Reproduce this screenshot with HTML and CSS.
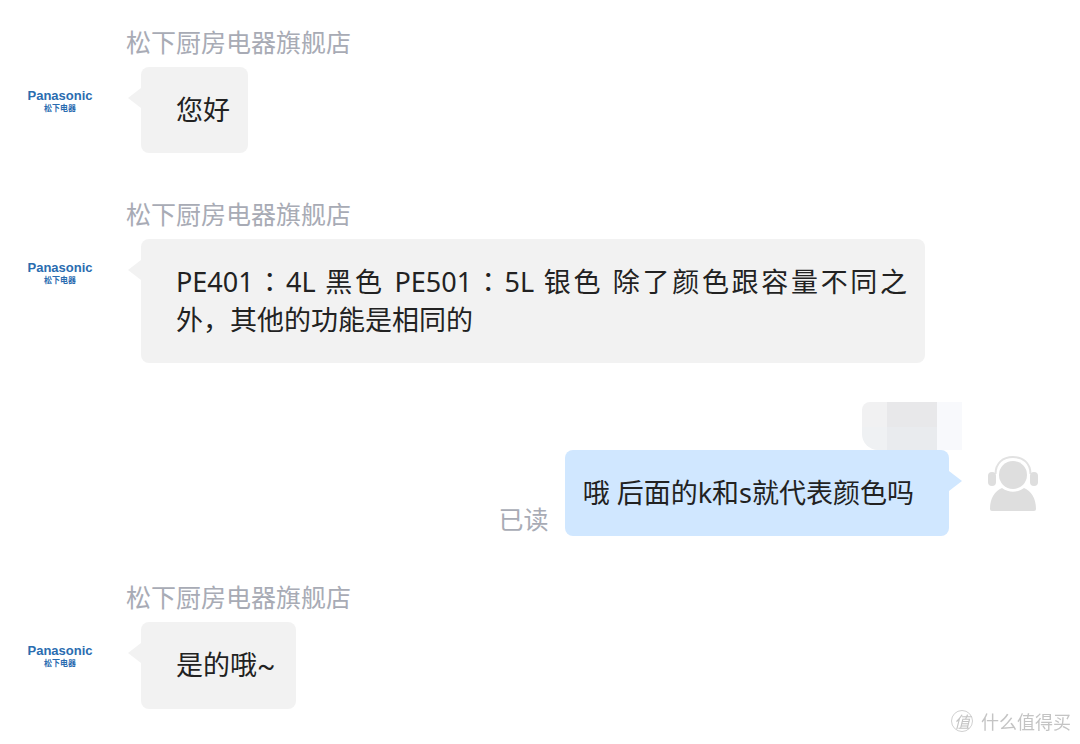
FILE: index.html
```
<!DOCTYPE html>
<html lang="zh-CN">
<head>
    <meta charset="UTF-8" />
    <meta name="viewport" content="width=device-width, initial-scale=1.0" />
    <title>松下厨房电器旗舰店</title>
    <link rel="stylesheet" href="styles.css">
</head>
<body>
    <main class="chat">
        <div class="message">
            <div class="logo"><span class="logo-name">Panasonic</span><span class="logo-sub">松下电器</span></div>
            <div class="content">
                <div class="name">松下厨房电器旗舰店</div>
                <div class="bubble">您好</div>
            </div>
        </div>

        <div class="message">
            <div class="logo"><span class="logo-name">Panasonic</span><span class="logo-sub">松下电器</span></div>
            <div class="content">
                <div class="name">松下厨房电器旗舰店</div>
                <div class="bubble" lang="zh-TW">PE401：4L 黑色 PE501：5L 银色 除了颜色跟容量不同之<span class="keep" lang="zh-CN">外，其他</span>的功能是相同的</div>
            </div>
        </div>

        <div class="message own">
            <div class="content">
                <div class="masked-name">
                    <span class="mask-light"></span><span class="mask-dark"></span><span class="mask-pale"></span>
                    <span class="mask-light low"></span><span class="mask-dark low"></span><span class="mask-pale"></span>
                </div>
                <div class="row">
                    <span class="read">已读</span>
                    <div class="bubble">哦 后面的k和s就代表颜色吗</div>
                </div>
            </div>
            <svg class="avatar" width="52" height="58" viewBox="0 0 52 58" fill="#dedede">
                <path d="M8.500 19 C8.500 8 16 2 26 2 C36 2 43.500 8 43.500 19" fill="none" stroke="#e2e2e2" stroke-width="2" />
                <rect x="1" y="17" width="8" height="14" rx="4" />
                <rect x="43" y="17" width="8" height="14" rx="4" />
                <circle cx="26" cy="20" r="14" />
                <path d="M3 54 C3 43 8 36 15 33 C22 38 30 38 37 33 C44 36 49 43 49 54 Q49 56 47 56 H5 Q3 56 3 54 Z" />
            </svg>
        </div>

        <div class="message">
            <div class="logo"><span class="logo-name">Panasonic</span><span class="logo-sub">松下电器</span></div>
            <div class="content">
                <div class="name">松下厨房电器旗舰店</div>
                <div class="bubble">是的哦<span class="tilde">~</span></div>
            </div>
        </div>
    </main>

    <div class="watermark"><span class="watermark-icon">值</span>什么值得买</div>
</body>
</html>
```
FILE: styles.css
```
* {
    box-sizing: border-box;
    margin: 0;
    padding: 0;
}

body {
    background: #fff;
    color: #222;
    font-family: "Noto Sans", "Noto Sans CJK SC", sans-serif;
    font-size: 27px;
    line-height: 38px;
}

.chat {
    display: flex;
    flex-direction: column;
    gap: 46px;
    padding: 27px 0 32px;
}

.message {
    display: flex;
    gap: 34px;
    padding: 0 155px 0 28px;
}

.logo {
    display: flex;
    flex-direction: column;
    align-items: center;
    flex: none;
    width: 64px;
    padding-top: 62px;
    color: #2a6cb0;
    font-weight: bold;
}

.logo-name {
    font-family: "Liberation Sans", sans-serif;
    font-size: 13px;
    line-height: 14px;
}

.logo-sub {
    font-family: "Noto Sans CJK SC", sans-serif;
    font-size: 8px;
    line-height: 10px;
}

.content {
    display: flex;
    flex-direction: column;
    align-items: flex-start;
    gap: 12px;
}

.name, .read {
    color: #a8abb5;
    font-family: "Noto Sans CJK SC", sans-serif;
    font-size: 25px;
    line-height: 28px;
}

.bubble {
    position: relative;
    margin-left: 15px;
    padding: 24px 18px 24px 35px;
    border-radius: 8px;
    background: #f2f2f2;
    text-align: justify;
    text-spacing-trim: space-all;
}

.bubble:lang(zh-TW) {
    font-family: "Noto Sans", "Noto Sans CJK TC", sans-serif;
}

.bubble::before {
    content: "";
    position: absolute;
    top: 21px;
    right: 100%;
    border: 10px solid transparent;
    border-left-width: 0;
    border-right: 13px solid #f2f2f2;
}

.keep {
    font-family: "Noto Sans", "Noto Sans CJK SC", sans-serif;
    white-space: nowrap;
}

.tilde {
    padding-right: 3px;
    font-family: Roboto, sans-serif;
}

.own {
    justify-content: flex-end;
    gap: 25px;
    margin-top: -7px;
    padding: 0 41px 0 28px;
}

.own .content {
    align-items: flex-end;
    gap: 0;
}

.own .bubble {
    margin: 0 13px 0 16px;
    padding: 24px 35px 24px 18px;
    background: #d0e7ff;
}

.own .bubble::before {
    right: auto;
    left: 100%;
    border-right-width: 0;
    border-left: 13px solid #d0e7ff;
}

.row {
    display: flex;
    align-items: flex-end;
}

.read {
    flex: none;
    line-height: 36px;
}

.masked-name {
    display: grid;
    grid-template-columns: 25px 50px 25px;
    grid-template-rows: 25px 23px;
    border-radius: 8px 0 0 16px;
    overflow: hidden;
}

.mask-light {
    background: #f1f1f2;
}

.mask-dark {
    background: #e8e8ea;
}

.mask-pale {
    background: #f8f9fc;
}

.mask-light.low {
    background: #eff1f3;
}

.mask-dark.low {
    background: #e9ebee;
}

.avatar {
    flex: none;
    margin-top: 53px;
}

.watermark {
    position: fixed;
    right: 9px;
    bottom: 11px;
    display: flex;
    align-items: center;
    gap: 8px;
    color: #c4c4c4;
    font-family: "Noto Sans CJK SC", sans-serif;
    font-size: 18px;
    line-height: 24px;
}

.watermark-icon {
    width: 22px;
    height: 22px;
    border: 1px solid #d0d0d0;
    border-radius: 50%;
    font-size: 16px;
    font-style: italic;
    line-height: 20px;
    text-align: center;
}
```
